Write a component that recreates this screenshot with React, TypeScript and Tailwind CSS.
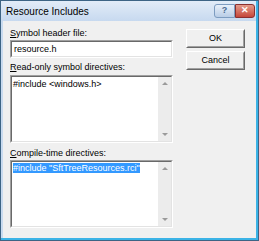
import React from 'react'

const font = {fontFamily: '"Liberation Sans", Arial, sans-serif'}

function Sunken({className, children}: {className?: string; children?: React.ReactNode}) {
  // classic 3D sunken edit border
  return (
    <div className={`border border-t-[#a0a0a0] border-l-[#a0a0a0] border-r-white border-b-white ${className ?? ''}`}>
      <div className="h-full border border-t-[#696969] border-l-[#696969] border-r-[#e3e3e3] border-b-[#e3e3e3] bg-white">
        {children}
      </div>
    </div>
  )
}

function Scroller() {
  return (
    <div className="w-[13px] h-full bg-[#ececec] flex flex-col items-center justify-between py-[5px]">
      <div className="w-0 h-0 border-l-[3px] border-r-[3px] border-b-[3px] border-l-transparent border-r-transparent border-b-[#9a9a9a]" />
      <div className="w-0 h-0 border-l-[3px] border-r-[3px] border-t-[3px] border-l-transparent border-r-transparent border-t-[#9a9a9a]" />
    </div>
  )
}

function Button({label}: {label: string}) {
  return (
    <div className="h-[19px] border border-t-white border-l-white border-r-[#696969] border-b-[#696969]">
      <div className="h-full flex items-center justify-center border border-t-[#f0f0f0] border-l-[#f0f0f0] border-r-[#a0a0a0] border-b-[#a0a0a0] bg-[#f0f0f0] text-[9px] text-black">
        {label}
      </div>
    </div>
  )
}

export default function App() {
  return (
    <div className="w-[259px] h-[241px] bg-[#3d6485] p-[1px]" style={font}>
      <div className="w-full h-full flex flex-col bg-[#c9dbf0] border-r-2 border-b-2 border-[#3bb3e6]">
        {/* title bar */}
        <div className="h-[20px] flex items-center bg-gradient-to-b from-[#e2ecf8] to-[#c7d9ef] pl-[5px] pr-[1px]">
          <span className="text-[10px] text-black flex-1">Resource Includes</span>
          <div className="flex items-center self-start mt-[3px]">
            <div className="w-[21px] h-[14px] rounded-l-[3px] border border-[#7d9cc0] bg-gradient-to-b from-[#e8f0fa] to-[#b9cde6] flex items-center justify-center text-[9px] font-bold text-[#4a6a90]">
              ?
            </div>
            <div className="w-[20px] h-[14px] rounded-r-[3px] border border-[#8a3030] bg-gradient-to-b from-[#e49a8a] to-[#c4453a] flex items-center justify-center text-[9px] font-bold text-white">
              ✕
            </div>
          </div>
        </div>
        {/* client area */}
        <div className="flex-1 ml-[2px] bg-[#f0f0f0] flex pl-[7px] pt-[7px]">
          <div className="w-[163px] flex flex-col">
            <div className="h-[11px] text-[9px] leading-[11px] text-black"><u>S</u>ymbol header file:</div>
            <Sunken className="mt-[1px] h-[18px]">
              <div className="pl-[2px] text-[9px] leading-[14px] text-black">resource.h</div>
            </Sunken>
            <div className="mt-[4px] h-[11px] text-[9px] leading-[11px] text-black"><u>R</u>ead-only symbol directives:</div>
            <Sunken className="mt-[2px] h-[68px]">
              <div className="h-full flex">
                <div className="flex-1 pl-[1px] pt-[2px] text-[9px] leading-[11px] text-black">#include &lt;windows.h&gt;</div>
                <Scroller />
              </div>
            </Sunken>
            <div className="mt-[5px] h-[11px] text-[9px] leading-[11px] text-black"><u>C</u>ompile-time directives:</div>
            <Sunken className="mt-[1px] h-[68px]">
              <div className="h-full flex">
                <div className="flex-1 pl-[1px] pt-[1px] text-[9px] leading-[11px]">
                  <span className="bg-[#3399ff] text-white">#include "SftTreeResources.rci"</span>
                </div>
                <Scroller />
              </div>
            </Sunken>
          </div>
          <div className="ml-[13px] w-[59px] flex flex-col pt-[1px] gap-[3px]">
            <Button label="OK" />
            <Button label="Cancel" />
          </div>
        </div>
      </div>
    </div>
  )
}
